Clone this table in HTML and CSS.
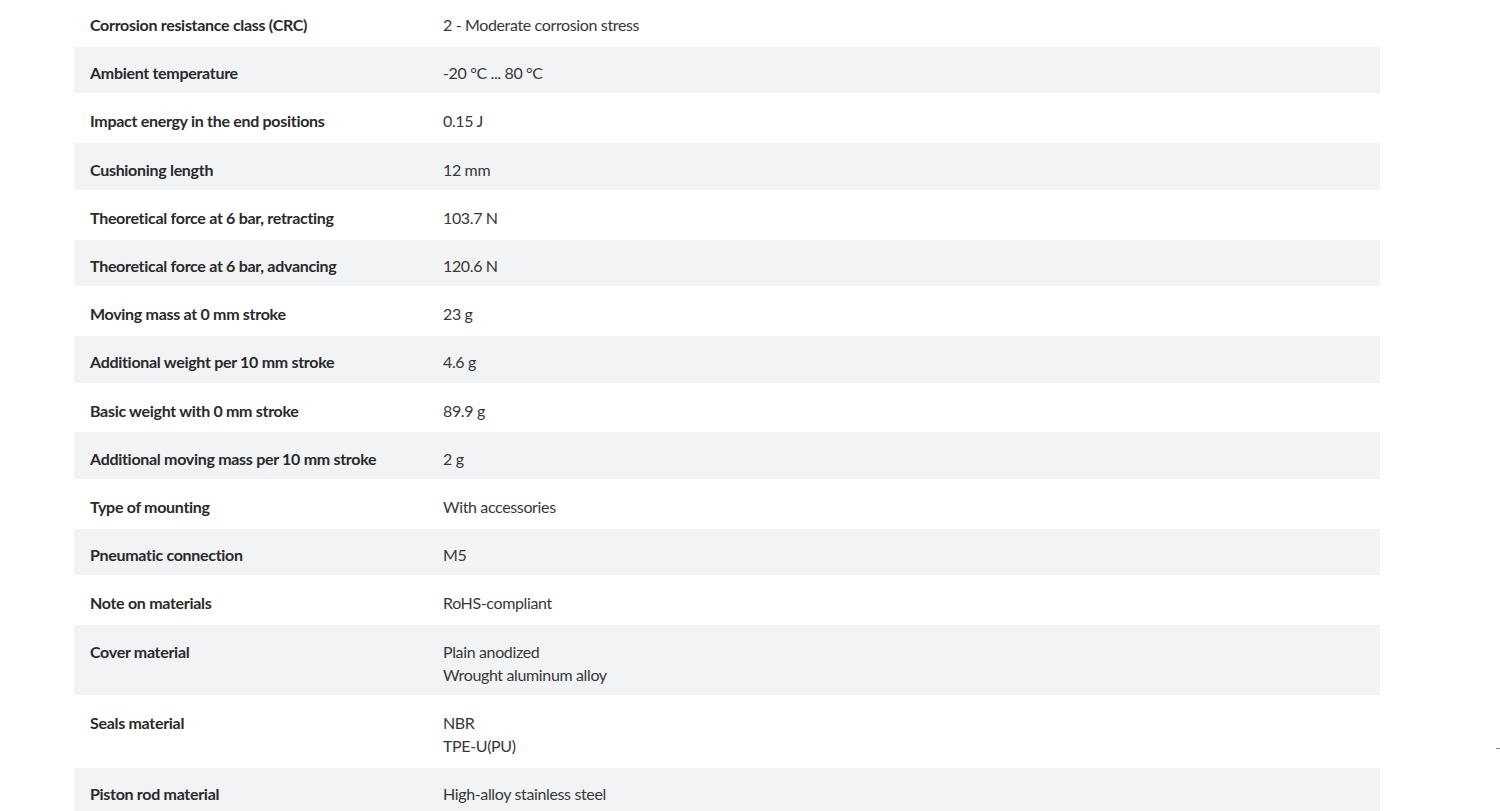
FILE: index.html
```html
<!DOCTYPE html>
<html lang="en">
<head>
<meta charset="utf-8">
<title>Technical data</title>
<link rel="stylesheet" href="styles.css">
</head>
<body>
<div class="page">
  <div class="specs">
    <div class="row"><div class="label">Corrosion resistance class (CRC)</div><div class="value">2 - Moderate corrosion stress</div></div>
    <div class="row alt"><div class="label">Ambient temperature</div><div class="value">-20 °C ... 80 °C</div></div>
    <div class="row"><div class="label">Impact energy in the end positions</div><div class="value">0.15 J</div></div>
    <div class="row alt"><div class="label">Cushioning length</div><div class="value">12 mm</div></div>
    <div class="row"><div class="label">Theoretical force at 6 bar, retracting</div><div class="value">103.7 N</div></div>
    <div class="row alt"><div class="label">Theoretical force at 6 bar, advancing</div><div class="value">120.6 N</div></div>
    <div class="row"><div class="label">Moving mass at 0 mm stroke</div><div class="value">23 g</div></div>
    <div class="row alt"><div class="label">Additional weight per 10 mm stroke</div><div class="value">4.6 g</div></div>
    <div class="row"><div class="label">Basic weight with 0 mm stroke</div><div class="value">89.9 g</div></div>
    <div class="row alt"><div class="label">Additional moving mass per 10 mm stroke</div><div class="value">2 g</div></div>
    <div class="row"><div class="label">Type of mounting</div><div class="value">With accessories</div></div>
    <div class="row alt"><div class="label">Pneumatic connection</div><div class="value">M5</div></div>
    <div class="row"><div class="label">Note on materials</div><div class="value">RoHS-compliant</div></div>
    <div class="row alt"><div class="label">Cover material</div><div class="value">Plain anodized<br>Wrought aluminum alloy</div></div>
    <div class="row"><div class="label">Seals material</div><div class="value">NBR<br>TPE-U(PU)</div></div>
    <div class="row alt"><div class="label">Piston rod material</div><div class="value">High-alloy stainless steel</div></div>
  </div>
  <span class="edge-mark"></span>
</div>
</body>
</html>
```
FILE: styles.css
```css
html, body {
  margin: 0;
  padding: 0;
  background: #ffffff;
}
body {
  font-family: Lato, "Liberation Sans", sans-serif;
  font-size: 16px;
  color: #333333;
  overflow: hidden;
}
.page {
  position: relative;
  height: 811px;
  overflow: hidden;
}
.specs {
  margin: -1.55px 0 0 74px;
  width: 1306px;
  display: flex;
  flex-direction: column;
  gap: 1.65px;
}
.row {
  display: grid;
  grid-template-columns: 353px 1fr;
  padding: 14.4px 16px 9.2px 16px;
  line-height: 23px;
}
.row.alt {
  background: #f2f3f5;
}
.label {
  font-weight: 700;
  color: #2a2a2a;
  letter-spacing: -0.3px;
}
.value {
  font-weight: 400;
  color: #383838;
  letter-spacing: -0.36px;
}
.edge-mark {
  position: absolute;
  right: 0;
  top: 748px;
  width: 4px;
  height: 1px;
  background: #888888;
}
```
